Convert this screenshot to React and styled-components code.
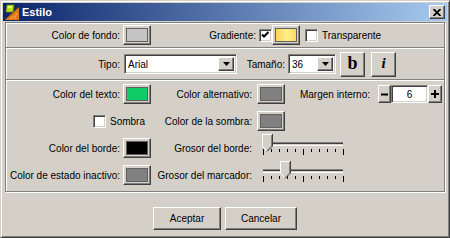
import React from 'react'
import styled, {createGlobalStyle} from 'styled-components'

const GlobalStl = createGlobalStyle`
  html, body {
    margin: 0;
    padding: 0;
    background: #d4d0c8;
  }
  body {
    font-family: "Liberation Sans", Arial, sans-serif;
    font-size: 10px;
    color: #000;
  }
`

const WindowStl = styled.div`
  box-sizing: border-box;
  width: 450px;
  height: 238px;
  padding: 2px;
  background: #d4d0c8;
  border: 1px solid;
  border-color: #d4d0c8 #404040 #404040 #d4d0c8;
  box-shadow: inset 1px 1px #fff, inset -1px -1px #808080;
  display: flex;
  flex-direction: column;
`

const TitleBarStl = styled.div`
  height: 18px;
  display: flex;
  align-items: center;
  padding: 0 2px 0 1px;
  background: linear-gradient(to right, #0a246a, #a6caf0);
`

const TitleTextStl = styled.div`
  margin-left: 2px;
  flex: 1 1 auto;
  color: #fff;
  font-weight: bold;
  font-size: 11px;
`

const RaisedStl = styled.div`
  box-sizing: border-box;
  border: 1px solid;
  border-color: #fff #404040 #404040 #fff;
  box-shadow: inset -1px -1px #808080;
  background: #d4d0c8;
  display: flex;
  align-items: center;
  justify-content: center;
`

const CloseBtnStl = styled(RaisedStl)`
  width: 16px;
  height: 14px;
`

const BodyStl = styled.div`
  padding: 1px 2px 0;
  display: flex;
  flex-direction: column;
`

const PanelStl = styled.div`
  box-sizing: border-box;
  height: 170px;
  border: 1px solid #808080;
  box-shadow: inset 1px 1px #fff, 1px 1px #fff;
  display: flex;
  flex-direction: column;
`

const RowStl = styled.div`
  display: flex;
  align-items: center;
  height: ${({h}) => h}px;
  flex: none;
`

const DividerStl = styled.div`
  flex: none;
  border-top: 1px solid #808080;
  border-bottom: 1px solid #fff;
`

const LabelStl = styled.div`
  box-sizing: border-box;
  flex: none;
  width: ${({w}) => (w ? `${w}px` : 'auto')};
  padding-right: ${({pr}) => pr || 0}px;
  text-align: right;
  white-space: nowrap;
`

const SwatchStl = styled(RaisedStl)`
  flex: none;
  width: 28px;
  height: 20px;
  padding: 2px;
`

const SwatchFillStl = styled.div`
  box-sizing: border-box;
  width: 100%;
  height: 100%;
  border: 1px solid #606060;
  background: ${({fill}) => fill};
`

const CheckStl = styled.div`
  box-sizing: border-box;
  flex: none;
  width: 13px;
  height: 13px;
  background: #fff;
  border: 1px solid;
  border-color: #808080 #fff #fff #808080;
  box-shadow: inset 1px 1px #404040, inset -1px -1px #d4d0c8;
  display: flex;
`

const CheckLabelStl = styled.label`
  display: flex;
  align-items: center;
  gap: 4px;
  margin-left: ${({ml}) => ml || 0}px;
  white-space: nowrap;
`

const ComboStl = styled.div`
  box-sizing: border-box;
  flex: none;
  width: ${({w}) => w}px;
  height: 20px;
  background: #fff;
  border: 1px solid;
  border-color: #808080 #fff #fff #808080;
  box-shadow: inset 1px 1px #404040, inset -1px -1px #d4d0c8;
  display: flex;
  align-items: stretch;
  padding: 2px;
`

const ComboTextStl = styled.div`
  flex: 1 1 auto;
  display: flex;
  align-items: center;
  padding-left: 1px;
`

const ComboArrowStl = styled(RaisedStl)`
  width: 16px;
  flex: none;
`

const ToolBtnStl = styled(RaisedStl)`
  flex: none;
  width: 25px;
  height: 25px;
  margin-left: ${({ml}) => ml}px;
  font-family: "Liberation Serif", "DejaVu Serif", serif;
  font-weight: bold;
  font-style: ${({italic}) => (italic ? 'italic' : 'normal')};
  font-size: ${({italic}) => (italic ? 15 : 18)}px;
  line-height: 1;
  padding-bottom: 2px;
`

const GridStl = styled.div`
  box-sizing: border-box;
  height: 110px;
  display: grid;
  grid-template-columns: 117px 28px 106px 28px 93px 66px;
  grid-template-rows: repeat(4, 20px);
  row-gap: 7px;
  padding-top: 3px;
  align-items: center;
`

const CellStl = styled.div`
  grid-column: ${({span}) => span || 'auto'};
  display: flex;
  align-items: center;
  justify-content: ${({end}) => (end ? 'flex-end' : 'flex-start')};
  padding-right: ${({pr}) => pr || 0}px;
  padding-left: ${({pl}) => pl || 0}px;
  white-space: nowrap;
  height: 20px;
`

const SpinnerStl = styled.div`
  display: flex;
  height: 18px;
`

const SpinBtnStl = styled(RaisedStl)`
  width: ${({w}) => w}px;
  height: 18px;
  flex: none;
`

const SpinInputStl = styled.div`
  box-sizing: border-box;
  width: 37px;
  height: 18px;
  background: #fff;
  border: 1px solid;
  border-color: #808080 #fff #fff #808080;
  box-shadow: inset 1px 1px #404040, inset -1px -1px #d4d0c8;
  display: flex;
  align-items: center;
  justify-content: center;
`

const FooterStl = styled.div`
  display: flex;
  justify-content: center;
  gap: 4px;
  margin-top: 15px;
`

const ButtonStl = styled(RaisedStl)`
  width: ${({w}) => w}px;
  height: 23px;
  font-size: 10px;
`

const AppIcon = () => (
  <svg width="16" height="16" viewBox="0 0 16 16">
    <polygon points="15,3 15,16 1,16" fill="#e0781c" />
    <line x1="15" y1="3" x2="1" y2="16" stroke="#a04808" strokeWidth="1" />
    <line x1="6" y1="15" x2="9" y2="12" stroke="#f8b050" strokeWidth="1" />
    <line x1="10" y1="15" x2="13" y2="9" stroke="#f8b050" strokeWidth="1" />
    <polygon points="3,1 10,1 9,8 2,8" fill="#b8e018" stroke="#6c8a08" strokeWidth="0.8" />
    <polygon points="4,2 8,2 7.6,4 3.6,4" fill="#e4f870" />
  </svg>
)

const CloseIcon = () => (
  <svg width="8" height="7" viewBox="0 0 8 7">
    <path d="M0.5 0 L7.5 7 M7.5 0 L0.5 7" stroke="#000" strokeWidth="1.8" />
  </svg>
)

const ArrowDown = () => (
  <svg width="7" height="4" viewBox="0 0 7 4">
    <polygon points="0,0 7,0 3.5,4" fill="#000" />
  </svg>
)

const CheckMark = () => (
  <svg width="11" height="11" viewBox="0 0 11 11">
    <polyline points="2,4.5 4,6.5 8.5,2" fill="none" stroke="#000" strokeWidth="2" />
  </svg>
)

const Swatch = ({fill}) => (
  <SwatchStl>
    <SwatchFillStl fill={fill} />
  </SwatchStl>
)

const Checkbox = ({checked}) => <CheckStl>{checked && <CheckMark />}</CheckStl>

const Combo = ({w, value}) => (
  <ComboStl w={w}>
    <ComboTextStl>{value}</ComboTextStl>
    <ComboArrowStl>
      <ArrowDown />
    </ComboArrowStl>
  </ComboStl>
)

const Slider = ({pos}) => {
  const ticks = []
  for (let i = 0; i <= 10; i++) {
    const x = 1.5 + i * 8
    const long = i % 5 === 0
    ticks.push(<line key={i} x1={x} x2={x} y1={15} y2={long ? 21 : 18} stroke="#000" strokeWidth="1" />)
  }
  return (
    <svg width="90" height="28" viewBox="0 0 90 28" style={{overflow: 'visible'}}>
      <rect x="1" y="8" width="80" height="1" fill="#808080" />
      <rect x="1" y="9" width="80" height="1" fill="#404040" />
      <rect x="1" y="11" width="80" height="1" fill="#fff" />
      {ticks}
      <polygon points={`${pos},0 ${pos + 10},0 ${pos + 10},12 ${pos + 5},17 ${pos},12`} fill="#d4d0c8" />
      <polyline points={`${pos + 5},17 ${pos + 0.5},12 ${pos + 0.5},0.5 ${pos + 10},0.5`} fill="none" stroke="#fff" strokeWidth="1" />
      <polyline points={`${pos + 10.5},0 ${pos + 10.5},12 ${pos + 5},17.5`} fill="none" stroke="#404040" strokeWidth="1" />
      <polyline points={`${pos + 9.5},1 ${pos + 9.5},12 ${pos + 5},16.5`} fill="none" stroke="#808080" strokeWidth="1" />
    </svg>
  )
}

const Spinner = ({value}) => (
  <SpinnerStl>
    <SpinBtnStl w={13}>
      <svg width="7" height="7" viewBox="0 0 7 7">
        <rect x="0" y="2.5" width="7" height="2" fill="#000" />
      </svg>
    </SpinBtnStl>
    <SpinInputStl>{value}</SpinInputStl>
    <SpinBtnStl w={14}>
      <svg width="8" height="8" viewBox="0 0 8 8">
        <rect x="0" y="3" width="8" height="2" fill="#000" />
        <rect x="3" y="0" width="2" height="8" fill="#000" />
      </svg>
    </SpinBtnStl>
  </SpinnerStl>
)

export default function App() {
  return (
    <>
      <GlobalStl />
      <WindowStl>
        <TitleBarStl>
          <AppIcon />
          <TitleTextStl>Estilo</TitleTextStl>
          <CloseBtnStl>
            <CloseIcon />
          </CloseBtnStl>
        </TitleBarStl>

        <BodyStl>
          <PanelStl>
            <RowStl h={24}>
              <LabelStl w={117} pr={3}>Color de fondo:</LabelStl>
              <Swatch fill="#c4c4c4" />
              <LabelStl w={108} pr={3}>Gradiente:</LabelStl>
              <Checkbox checked />
              <Swatch fill="linear-gradient(to right, #ffd25a, #fff08c 55%, #ffd866)" />
              <CheckLabelStl ml={5}>
                <Checkbox />
                Transparente
              </CheckLabelStl>
            </RowStl>

            <DividerStl />

            <RowStl h={30}>
              <LabelStl w={118} pr={4}>Tipo:</LabelStl>
              <Combo w={113} value="Arial" />
              <LabelStl w={51} pr={3}>Tamaño:</LabelStl>
              <Combo w={48} value="36" />
              <ToolBtnStl ml={4}>b</ToolBtnStl>
              <ToolBtnStl ml={6} italic>i</ToolBtnStl>
            </RowStl>

            <DividerStl />

            <GridStl>
              <CellStl end pr={3}>Color del texto:</CellStl>
              <Swatch fill="#10cc66" />
              <CellStl end pr={5}>Color alternativo:</CellStl>
              <Swatch fill="#808080" />
              <CellStl end pr={8}>Margen interno:</CellStl>
              <Spinner value="6" />

              <CellStl span="1 / span 2" end pr={6}>
                <CheckLabelStl>
                  <Checkbox />
                  Sombra
                </CheckLabelStl>
              </CellStl>
              <CellStl end pr={5}>Color de la sombra:</CellStl>
              <Swatch fill="#808080" />
              <CellStl span="5 / span 2" />

              <CellStl end pr={3}>Color del borde:</CellStl>
              <Swatch fill="#000" />
              <CellStl end pr={5}>Grosor del borde:</CellStl>
              <CellStl span="4 / span 2" pl={5}>
                <Slider pos={0} />
              </CellStl>
              <CellStl />

              <CellStl end pr={3}>Color de estado inactivo:</CellStl>
              <Swatch fill="#808080" />
              <CellStl end pr={5}>Grosor del marcador:</CellStl>
              <CellStl span="4 / span 2" pl={5}>
                <Slider pos={18} />
              </CellStl>
              <CellStl />
            </GridStl>
          </PanelStl>

          <FooterStl>
            <ButtonStl w={68}>Aceptar</ButtonStl>
            <ButtonStl w={72}>Cancelar</ButtonStl>
          </FooterStl>
        </BodyStl>
      </WindowStl>
    </>
  )
}
